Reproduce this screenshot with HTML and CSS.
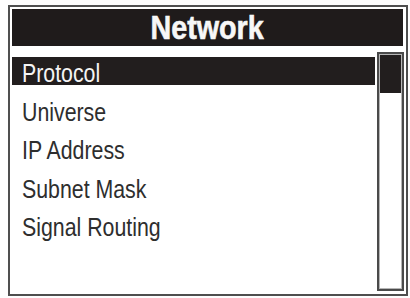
FILE: index.html
```html
<!DOCTYPE html>
<html>
<head>
<meta charset="utf-8">
<link rel="stylesheet" href="styles.css">
</head>
<body>
<div class="frame">
  <div class="header"><span class="title">Network</span></div>
  <div class="content">
    <ul class="menu">
      <li class="item selected"><span class="label">Protocol</span></li>
      <li class="item"><span class="label">Universe</span></li>
      <li class="item"><span class="label">IP Address</span></li>
      <li class="item"><span class="label">Subnet Mask</span></li>
      <li class="item"><span class="label">Signal Routing</span></li>
    </ul>
    <div class="scrollbar"><div class="thumb"></div></div>
  </div>
</div>
</body>
</html>
```
FILE: styles.css
```css
html, body {
  margin: 0;
  padding: 0;
  background: #fdfdfd;
}
body {
  width: 410px;
  height: 298px;
  overflow: hidden;
  font-family: "Liberation Sans", Arial, sans-serif;
}
.frame {
  box-sizing: border-box;
  margin: 5px 0 0 8px;
  width: 400px;
  height: 291px;
  border: 2px solid #4e4e4e;
  padding: 2px;
  display: flex;
  flex-direction: column;
  background: #fff;
}
.header {
  height: 37px;
  line-height: 37px;
  margin-right: 1px;
  background: #1f1b1b;
  color: #f7f7f7;
  font-weight: bold;
  font-size: 33px;
  text-align: center;
}
.title {
  display: inline-block;
  transform: scaleX(0.87);
  transform-origin: center;
  -webkit-text-stroke: 0.6px #f7f7f7;
}
.content {
  flex: 1;
  display: flex;
  margin-top: 6px;
  min-height: 0;
}
.menu {
  flex: 1;
  list-style: none;
  margin: 0;
  padding: 5px 0 0 0;
}
.item {
  height: 28px;
  line-height: 32px;
  margin-bottom: 10.5px;
  padding-left: 10px;
  font-size: 26px;
  color: #2e2e2e;
  white-space: nowrap;
}
.label {
  display: inline-block;
  transform: scaleX(0.82);
  transform-origin: left center;
}
.item.selected {
  background: #221e1e;
  color: #f4f4f4;
}
.scrollbar {
  box-sizing: border-box;
  width: 27px;
  margin-left: 2px;
  margin-bottom: 1px;
  border: 2px solid #4a4a4a;
  box-shadow: inset 0 0 0 1px #b5b5b5;
  padding: 1px 1px;
  background: #fff;
}
.thumb {
  height: 38px;
  background: #221e1e;
}
```
